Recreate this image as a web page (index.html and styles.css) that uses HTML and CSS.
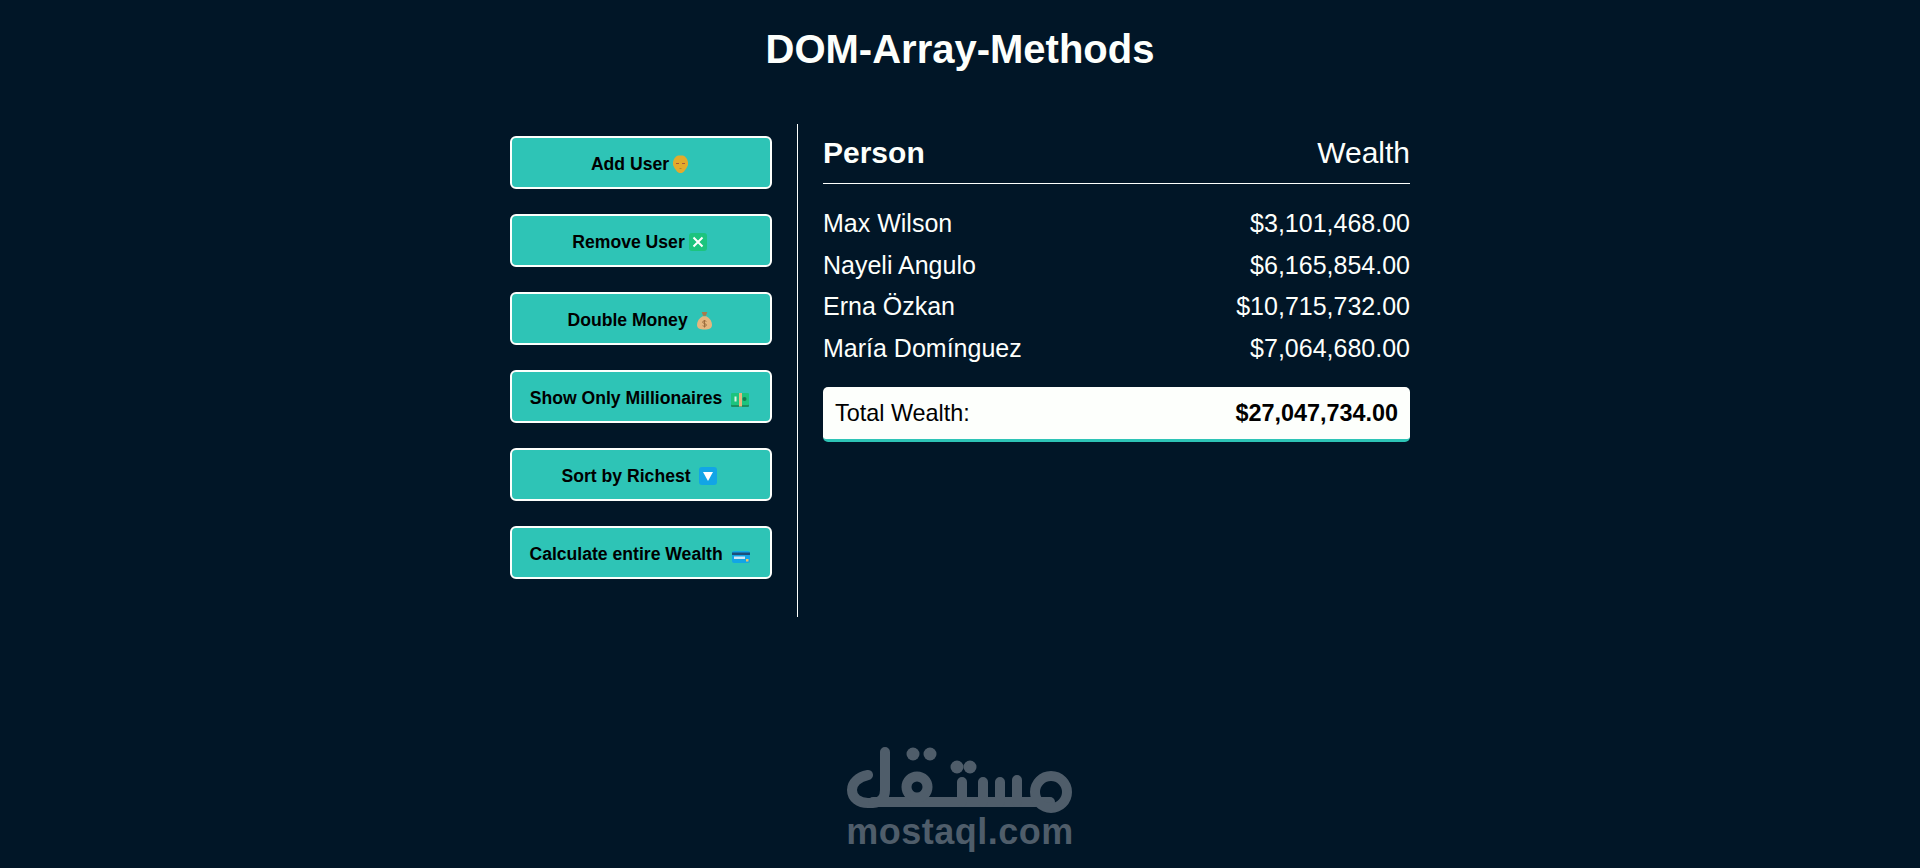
FILE: index.html
```html
<!DOCTYPE html>
<html lang="en">
<head>
<meta charset="utf-8">
<title>DOM-Array-Methods</title>
<link rel="stylesheet" href="styles.css">
</head>
<body>
<h1 class="title">DOM-Array-Methods</h1>
<div class="container">
  <aside class="actions">
    <button class="btn">Add User
      <svg class="ico" viewBox="0 0 15 18"><path d="M3 1.500 L5 .5 H10 L12 1.500 L14 4 L15 7 V10 L13.500 13 L11 16.500 L9 18 H6 L4 16.500 L1.500 13 L0 10 V7 L1 4Z" fill="#e3ab2c"/><path d="M3 8.500h3M9 8.500h3" stroke="#a85a3a"/><path d="M6.500 13.500h2" stroke="#b5862a"/></svg>
    </button>
    <button class="btn">Remove User
      <svg class="ico ico-sq" viewBox="0 0 18 18"><rect width="18" height="18" rx="3" fill="#1cc47e"/><path d="M4.500 4.500l9 9M13.500 4.500l-9 9" stroke="#fff" stroke-width="2"/></svg>
    </button>
    <button class="btn">Double Money&nbsp;
      <svg class="ico ico-bag" viewBox="0 0 16 19"><path d="M5 .5h6l-1.500 4h-3z" fill="#a9794a"/><path d="M6 5h4c4 2 6 6 6 9 0 4-3 5-8 5s-8-1-8-5c0-3 2-7 6-9z" fill="#e5b67e"/><path d="M10 10.500c-1-1-4-1-4 .8s4 1 4 3-3 1.500-4 .7M8 9v8" fill="none" stroke="#9a6b3c"/></svg>
    </button>
    <button class="btn">Show Only Millionaires&nbsp;
      <svg class="ico ico-bill" viewBox="0 0 18 14"><rect y="11" width="18" height="3" rx="1" fill="#1a8f60"/><rect width="18" height="12" rx="1" fill="#1cc47e"/><rect x="8" width="3" height="13.500" fill="#e5b67e"/><rect x="3.500" y="3.500" width="2" height="5" fill="#d7f5e8"/><circle cx="13.500" cy="6" r="2" fill="#137a50"/></svg>
    </button>
    <button class="btn">Sort by Richest&nbsp;
      <svg class="ico ico-sq" viewBox="0 0 18 18"><rect width="18" height="18" rx="3" fill="#12a5e6"/><path d="M4 5h10l-5 9z" fill="#fff"/></svg>
    </button>
    <button class="btn">Calculate entire Wealth&nbsp;
      <svg class="ico ico-card" viewBox="0 0 18 12"><rect width="18" height="12" rx="2" fill="#12a5e6"/><rect y="1.500" width="18" height="2.500" fill="#1c4f7a"/><rect x="2" y="5.500" width="11" height="2.500" fill="#cfe6f5"/><rect x="14" y="8" width="2.500" height="2.500" fill="#f0c060"/></svg>
    </button>
  </aside>
  <main class="board">
    <div class="row head"><strong>Person</strong><span>Wealth</span></div>
    <div class="people">
      <div class="row"><span>Max Wilson</span><span>$3,101,468.00</span></div>
      <div class="row"><span>Nayeli Angulo</span><span>$6,165,854.00</span></div>
      <div class="row"><span>Erna Özkan</span><span>$10,715,732.00</span></div>
      <div class="row"><span>María Domínguez</span><span>$7,064,680.00</span></div>
    </div>
    <div class="total"><span>Total Wealth:</span><strong>$27,047,734.00</strong></div>
  </main>
</div>
<footer class="mark">
  <svg class="mark-logo" viewBox="840 740 240 74">
    <g fill="none" stroke="#4f5d6a" stroke-width="10" stroke-linecap="round" stroke-linejoin="round">
      <path d="M868 775C858 777 852 783 852 790C852 798 859 803 868 803H873C881 803 885 797 885 790V752"/>
      <path d="M873 802H1050"/>
      <circle cx="917" cy="787" r="10.500"/>
      <circle cx="1051" cy="792" r="16"/>
      <path d="M962 782V802M983 782V802M1000 782V802M1017 780V802"/>
    </g>
    <g fill="#4f5d6a"><circle cx="913" cy="754" r="6.500"/><circle cx="930" cy="754" r="6.500"/><circle cx="957" cy="767" r="6.500"/><circle cx="970" cy="767" r="6.500"/></g>
  </svg>
  <div class="mark-text">mostaql.com</div>
</footer>
</body>
</html>
```
FILE: styles.css
```css
* { box-sizing: border-box; }
html, body { margin: 0; height: 100%; }
body {
  background: #011627;
  color: #fdfffc;
  font-family: "Liberation Sans", Arial, sans-serif;
  display: flex;
  flex-direction: column;
  align-items: center;
  height: 868px;
  overflow: hidden;
}
.title { margin: 24px 0 0; font-size: 40px; line-height: 50px; font-weight: 700; text-align: center; }
.container { display: flex; width: 900px; margin-top: 50px; height: 493px; }
.actions {
  width: 288px;
  border-right: 1px solid #fdfffc;
  padding: 12px 0 0;
  display: flex;
  flex-direction: column;
  gap: 25px;
}
.btn {
  width: 262px;
  height: 53px;
  background: #2ec4b6;
  border: 2px solid #fdfffc;
  border-radius: 6px;
  color: #000;
  font: 700 17.600px "Liberation Sans", Arial, sans-serif;
  display: flex;
  align-items: center;
  justify-content: center;
  gap: 4px;
  padding: 3px 3px 0 0;
}
.ico { width: 15px; height: 18px; }
.ico-sq { width: 18px; height: 18px; }
.ico-bag { width: 15px; height: 19px; }
.ico-bill { width: 18px; height: 14px; margin-top: 4px; }
.ico-card { width: 18px; height: 12px; margin-top: 6px; }
.board { flex: 1; padding: 0 0 0 25px; font-size: 25px; }
.row { display: flex; justify-content: space-between; align-items: center; }
.head { height: 60px; font-size: 30px; padding-bottom: 2px; border-bottom: 1px solid #fdfffc; }
.people { margin-top: 19px; display: flex; flex-direction: column; }
.people .row { height: 41.500px; }
.total {
  margin-top: 18px;
  height: 55px;
  font-size: 23.400px;
  background: #fdfffc;
  color: #000;
  border-bottom: 3px solid #2ec4b6;
  border-radius: 5px;
  padding: 0 12px;
  display: flex;
  justify-content: space-between;
  align-items: center;
}
.mark { margin-top: 123px; display: flex; flex-direction: column; align-items: center; }
.mark-logo { width: 240px; height: 74px; display: block; }
.mark-text { font-size: 36px; line-height: 36px; font-weight: 700; color: #4f5d6a; letter-spacing: .5px; }
```
